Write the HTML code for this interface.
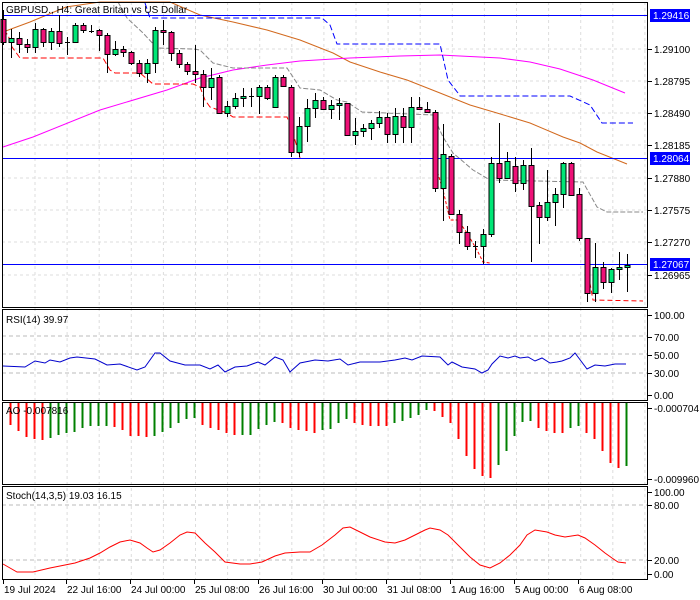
<!DOCTYPE html>
<html><head><meta charset="utf-8"><style>
html,body{margin:0;padding:0;background:#fff;width:700px;height:600px;overflow:hidden}
svg{display:block;font-family:"Liberation Sans",sans-serif;font-size:10px}
</style></head><body>
<svg id="s" width="700" height="600" xmlns="http://www.w3.org/2000/svg"></svg>
<script>
var s=document.getElementById('s'),h='';
function L(p,c,w,d){h+='<polyline fill="none" stroke="'+c+'" stroke-width="'+(w||1)+'"'+(d?' stroke-dasharray="'+d+'"':'')+' points="'+p.map(function(a){return a.join(',')}).join(' ')+'"/>';}
function T(x,y,t,c,a,ls){h+='<text x="'+x+'" y="'+y+'" fill="'+(c||'#000')+'"'+(a?' text-anchor="'+a+'"':'')+(ls?' letter-spacing="'+ls+'"':'')+'>'+t+'</text>';}
for(var gx=35;gx<647;gx+=32.1){h+='<line x1="'+gx.toFixed(1)+'" y1="2" x2="'+gx.toFixed(1)+'" y2="579" stroke="#ddd" stroke-dasharray="3,3"/>';}
[49,81,113,145,178,210,242,275].forEach(function(y){h+='<line x1="2" y1="'+y+'" x2="647" y2="'+y+'" stroke="#ddd" stroke-dasharray="3,3"/>';});
[336,354,373,505,560].forEach(function(y){h+='<line x1="2" y1="'+y+'" x2="647" y2="'+y+'" stroke="#bbb" stroke-dasharray="4,3"/>';});
L([[3,32],[30,22],[66,7],[100,2],[170,2],[200,15],[233,22],[267,30],[300,40],[333,53],[350,62],[380,72],[407,80],[440,93],[470,105],[497,113],[530,123],[563,137],[580,143],[597,152],[627,164]],'#d2691e');
L([[3,147],[33,137],[100,110],[167,90],[200,78],[233,70],[267,65],[300,61],[350,58],[400,56],[440,55],[500,58],[530,62],[560,69],[593,80],[625,93]],'#ff00ff');
L([[145,3],[150,18],[322,18],[330,25],[337,44],[440,44],[448,80],[458,93],[460,96],[570,96],[590,105],[602,123],[633,123]],'#0000ff',1,'6,3');
L([[118,2],[127,18],[143,33],[157,48],[193,49],[200,50],[213,63],[233,68],[287,68],[293,77],[300,88],[320,90],[337,100],[347,102],[362,112],[433,115],[443,137],[453,153],[473,170],[490,180],[583,182],[597,207],[607,212],[643,212]],'#888',1,'5,2');
L([[3,30],[8,35],[12,47],[20,58],[103,58],[110,70],[115,73],[140,73],[153,84],[193,84],[200,87],[205,100],[210,107],[227,113],[233,117],[287,117],[293,133],[300,158]],'#ff0000',1,'6,3');
L([[433,158],[443,190],[450,220],[458,220],[467,233],[477,250],[483,262],[490,263]],'#ff0000',1,'3,2');
L([[587,267],[593,300],[643,301]],'#ff0000',1,'5,3');
[15,158,264].forEach(function(y){h+='<line x1="2" y1="'+y+'.5" x2="647" y2="'+y+'.5" stroke="#0000ff"/>';});
var C=[['p',19,42,10,45],['g',38,42,29,58],['p',38,44,32,53],['p',44,47,39,53],['g',29,47,23,53],['p',29,42,28,47],['g',31,42,28,50],['p',31,43,15,47],['d',42,42,37,55],['g',25,42,23,42],['p',25,30,23,33],['d',31,31,25,33],['p',30,35,29,51],['p',35,54,33,73],['g',49,54,41,56],['p',49,52,46,57],['p',52,63,51,65],['p',63,73,60,77],['g',63,73,59,83],['g',30,63,27,73],['p',30,32,20,45],['p',32,53,31,61],['p',53,64,50,68],['p',64,71,62,75],['p',71,74,45,83],['p',74,87,70,107],['g',78,87,68,100],['p',77,113,75,113],['g',106,113,101,117],['g',98,106,93,109],['g',96,98,88,107],['d',96,96,88,107],['g',87,96,85,114],['p',87,98,85,100],['g',77,107,75,107],['p',77,86,75,87],['p',87,152,85,157],['g',126,152,117,157],['g',108,126,99,142],['g',100,108,93,118],['p',100,109,97,110],['g',105,109,100,119],
['g',103,105,98,120],['p',103,135,103,136],['g',131,135,118,145],['g',128,131,124,137],['g',123,128,120,140],['g',117,123,111,128],['p',117,134,113,143],['g',116,134,108,143],['p',116,127,108,143],['g',107,127,97,143],['p',107,109,97,110],['p',109,112,102,113],['p',112,188,110,192],['g',154,188,124,221],['p',156,214,154,215],['p',214,232,210,244],['p',232,246,226,250],['d',246,246,241,258],['g',234,246,229,264],['g',163,234,157,237],['p',163,178,123,183],['g',161,178,152,179],['p',166,183,157,192],['g',165,183,160,190],['p',165,206,148,262],['p',205,217,202,244],['g',202,217,170,221],['g',194,202,188,226],['g',163,194,162,208],['p',163,195,162,196],['p',194,238,188,241],['p',238,293,238,302],['g',267,293,243,302],['p',267,282,262,289],['g',269,282,268,293],['g',267,269,252,280],['g',265,267,254,292]];
C.forEach(function(c,i){var x=3+8*i;
h+='<line x1="'+(x+.5)+'" y1="'+c[3]+'" x2="'+(x+.5)+'" y2="'+c[4]+'" stroke="#000"/>';
if(c[0]=='d'){h+='<line x1="'+(x-2)+'" y1="'+(c[1]+.5)+'" x2="'+(x+3)+'" y2="'+(c[1]+.5)+'" stroke="#000"/>';}
else h+='<rect x="'+(x-2)+'" y="'+c[1]+'.5" width="5" height="'+Math.max(2,c[2]-c[1])+'" fill="'+(c[0]=='g'?'#00e676':'#ee1177')+'" stroke="#000"/>';});
L([[3,366],[25,367],[35,361],[45,363],[50,360],[60,362],[70,358],[77,357],[95,359],[107,365],[120,364],[137,370],[145,367],[155,353],[160,353],[170,361],[185,365],[200,365],[210,369],[218,365],[225,372],[235,367],[247,366],[258,362],[265,365],[275,357],[283,360],[290,372],[300,363],[315,360],[328,361],[340,359],[348,365],[360,362],[380,362],[395,360],[405,358],[412,360],[422,356],[440,357],[448,365],[452,362],[462,367],[475,369],[482,373],[488,370],[492,364],[500,356],[508,358],[515,356],[520,358],[528,357],[535,361],[542,358],[550,363],[557,362],[562,361],[570,358],[575,353],[587,369],[595,365],[605,366],[615,364],[626,364]],'#0000cc');
var A=[[10,425,'r'],[18,431,'r'],[26,437,'r'],[34,439,'r'],[42,440,'r'],[50,438,'g'],[58,435,'g'],[66,433,'g'],[74,432,'g'],[82,428,'g'],[90,426,'g'],[98,426,'g'],[106,426,'g'],[114,427,'r'],[122,430,'r'],[130,436,'r'],[138,436,'r'],[146,437,'r'],[154,436,'g'],[162,432,'g'],[170,428,'g'],[178,423,'g'],[186,419,'g'],[194,418,'g'],[202,425,'r'],[210,428,'r'],[218,430,'r'],[226,433,'r'],[234,435,'r'],[242,435,'g'],[250,435,'g'],[258,429,'g'],[266,425,'g'],[274,422,'g'],[282,423,'r'],[290,428,'r'],[298,430,'r'],[306,431,'r'],[314,433,'r'],[322,430,'g'],[330,429,'g'],[338,423,'g'],[346,419,'g'],[354,423,'r'],[362,425,'r'],[370,426,'r'],[378,426,'r'],[386,426,'r'],[394,423,'g'],[402,421,'g'],[410,418,'g'],[418,415,'g'],[426,410,'g'],[434,411,'r'],[442,417,'r'],[450,423,'r'],[458,439,'r'],[466,456,'r'],[474,469,'r'],[482,476,'r'],[490,478,'r'],[498,465,'g'],[506,451,'g'],[514,436,'g'],[522,422,'g'],[530,421,'g'],[538,428,'r'],[546,431,'r'],[554,433,'r'],[562,433,'r'],[570,428,'g'],[578,426,'g'],[586,433,'r'],[594,439,'r'],[602,451,'r'],[610,463,'r'],[618,468,'r'],[626,466,'g']];
A.forEach(function(a){h+='<line x1="'+(a[0]+.5)+'" y1="403" x2="'+(a[0]+.5)+'" y2="'+a[1]+'" stroke="'+(a[2]=='r'?'#ff0000':'#008000')+'" stroke-width="2"/>';});
L([[3,564],[10,568],[17,572],[33,572],[50,568],[65,565],[75,563],[90,558],[100,553],[110,547],[120,542],[130,540],[140,543],[147,548],[153,552],[160,550],[170,543],[180,535],[187,532],[195,533],[205,543],[215,552],[225,562],[240,564],[250,564],[262,562],[275,556],[285,553],[300,552],[310,552],[322,545],[335,535],[343,528],[350,527],[360,532],[370,537],[385,542],[395,543],[405,540],[415,535],[425,530],[430,528],[440,530],[448,535],[460,547],[470,557],[480,565],[490,568],[500,563],[510,555],[520,545],[527,535],[535,530],[547,532],[555,535],[565,537],[578,535],[585,538],[595,545],[605,553],[612,558],[618,562],[626,563]],'#ff0000');
[[2,2,307],[2,309,400],[2,402,484],[2,486,579]].forEach(function(p){h+='<rect x="'+(p[0]+.5)+'" y="'+(p[1]+.5)+'" width="645" height="'+(p[2]-p[1])+'" fill="none" stroke="#000"/>';});
[[49,'1.29100'],[81,'1.28795'],[113,'1.28490'],[145,'1.28185'],[178,'1.27880'],[210,'1.27575'],[242,'1.27270'],[275,'1.26965']].forEach(function(a){h+='<line x1="648" y1="'+(a[0]+.5)+'" x2="652" y2="'+(a[0]+.5)+'" stroke="#000"/>';T(654,a[0]+4,a[1]);});
[[15,'1.29416'],[158,'1.28064'],[264,'1.27067']].forEach(function(a){h+='<rect x="650" y="'+(a[0]-6)+'" width="40" height="13" fill="#0000ff"/>';T(653,a[0]+4,a[1],'#fff');});
[[315,'100.00'],[337,'70.00'],[355,'50.00'],[373,'30.00'],[395,'0.00'],[408,'-0.000704'],[479,'-0.009960'],[492,'100.00'],[505,'80.00'],[560,'20.00'],[574,'0.00']].forEach(function(a){h+='<line x1="648" y1="'+(a[0]+.5)+'" x2="652" y2="'+(a[0]+.5)+'" stroke="#000"/>';T(654,a[0]+4,a[1]);});
T(6,13,'GBPUSD., H4:  Great Britan vs US Dollar');
T(6,323,'RSI(14) 39.97');T(6,414,'AO -0.007816');T(6,499,'Stoch(14,3,5) 19.03 16.15');
[[3,'19 Jul 2024'],[66,'22 Jul 16:00'],[130,'24 Jul 00:00'],[194,'25 Jul 08:00'],[258,'26 Jul 16:00'],[322,'30 Jul 00:00'],[386,'31 Jul 08:00'],[450,'1 Aug 16:00'],[514,'5 Aug 00:00'],[578,'6 Aug 08:00']].forEach(function(a){h+='<line x1="'+(a[0]+.5)+'" y1="579" x2="'+(a[0]+.5)+'" y2="584" stroke="#000"/>';T(a[0]+1,593,a[1]);});
s.innerHTML=h;
</script>
</body></html>
